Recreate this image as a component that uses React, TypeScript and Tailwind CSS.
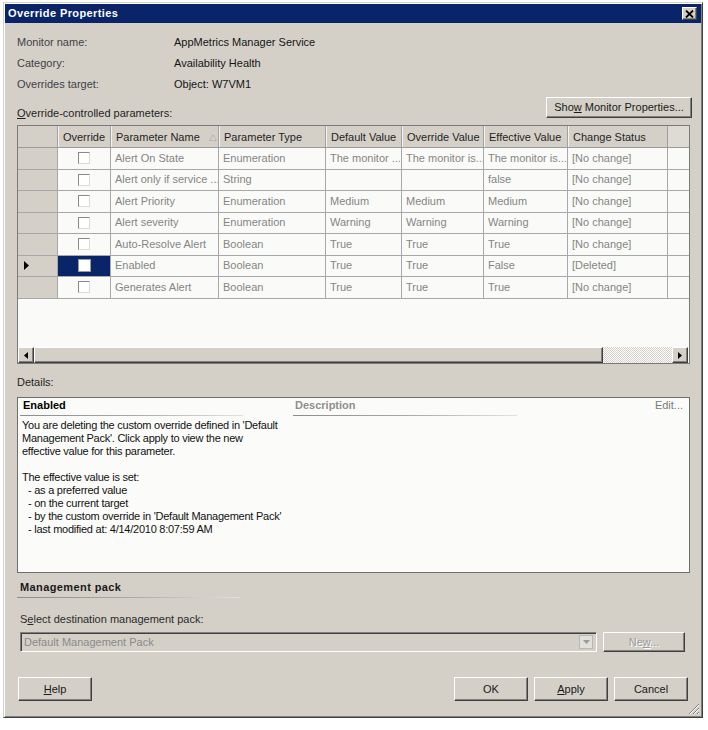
import React from "react";

const raised =
  "border border-t-white border-l-white border-r-[#404040] border-b-[#404040] shadow-[inset_-1px_-1px_0_#808080]";
const sunken =
  "border border-t-[#808080] border-l-[#808080] border-r-white border-b-white shadow-[inset_1px_1px_0_#404040]";

const rows = [
  ["Alert On State", "Enumeration", "The monitor ...", "The monitor is...", "The monitor is...", "[No change]"],
  ["Alert only if service ...", "String", "", "", "false", "[No change]"],
  ["Alert Priority", "Enumeration", "Medium", "Medium", "Medium", "[No change]"],
  ["Alert severity", "Enumeration", "Warning", "Warning", "Warning", "[No change]"],
  ["Auto-Resolve Alert", "Boolean", "True", "True", "True", "[No change]"],
  ["Enabled", "Boolean", "True", "True", "False", "[Deleted]"],
  ["Generates Alert", "Boolean", "True", "True", "True", "[No change]"],
];

const cols = "grid grid-cols-[40px_53px_108px_107px_76px_82px_84px_100px_1fr]";

function Check({ selected }: { selected?: boolean }) {
  return (
    <span
      className={
        selected
          ? "block w-[13px] h-[13px] bg-white border border-[#9a9a9a]"
          : "block w-[12px] h-[12px] bg-white border border-t-[#8a8a8a] border-l-[#8a8a8a] border-r-[#dcdcdc] border-b-[#dcdcdc]"
      }
    />
  );
}

function Btn({ children, className = "" }: { children: React.ReactNode; className?: string }) {
  return (
    <div className={`${raised} bg-[#d4d0c8] flex items-center justify-center text-[#1a1a1a] ${className}`}>
      {children}
    </div>
  );
}

function Fade({ w }: { w: string }) {
  return <div className={`h-px ${w} bg-gradient-to-r from-[#8c8c8c] via-[#a8a8a8] to-[#e2e2e2]`} />;
}

export default function App() {
  const headers = ["Override", "Parameter Name", "Parameter Type", "Default Value", "Override Value", "Effective Value", "Change Status"];
  const lines = [
    ["You are deleting the custom override defined in 'Default", false],
    ["Management Pack'. Click apply to view the new", false],
    ["effective value for this parameter.", false],
    ["\u00a0", false],
    ["The effective value is set:", false],
    ["- as a preferred value", true],
    ["- on the current target", true],
    ["- by the custom override in 'Default Management Pack'", true],
    ["- last modified at: 4/14/2010 8:07:59 AM", true],
  ] as const;

  return (
    <div className="w-[708px] h-[730px] bg-white pt-[2px] pl-[3px] font-['Liberation_Sans',Arial,sans-serif] text-[11px] leading-[13px]">
      <div className="w-[700px] h-[716px] p-[1px] bg-[#d4d0c8] border border-t-[#d4d0c8] border-l-[#d4d0c8] border-r-[#404040] border-b-[#404040] shadow-[inset_1px_1px_0_#ffffff,inset_-1px_-1px_0_#808080] flex flex-col">
        {/* title bar */}
        <div className="h-[19px] bg-[#0a246a] flex items-center justify-between pl-[3px] pr-[4px]">
          <span className="text-white font-bold text-[11px] tracking-[0.4px]">Override Properties</span>
          <div className={`${raised} w-[15px] h-[13px] bg-[#d4d0c8] flex items-center justify-center`}>
            <svg width="9" height="8" viewBox="0 0 9 8">
              <path d="M1 0.5 L8 7.5 M8 0.5 L1 7.5" stroke="#000" strokeWidth="1.8" />
            </svg>
          </div>
        </div>

        <div className="relative flex-1 pl-[12px] pr-[11px] pt-[9px] flex flex-col">
          {/* info */}
          {[
            ["Monitor name:", "AppMetrics Manager Service"],
            ["Category:", "Availability Health"],
            ["Overrides target:", "Object: W7VM1"],
          ].map(([k, v]) => (
            <div key={k} className="h-[21px] flex items-center">
              <span className="w-[157px] text-[#3f3f46]">{k}</span>
              <span className="text-[#151515]">{v}</span>
            </div>
          ))}

          <div className="h-[30px] flex justify-between">
            <span className="self-end pb-[5px] text-[#1f1f1f]">
              <u>O</u>verride-controlled parameters:
            </span>
            <Btn className="mt-[2px] mr-[-2px] w-[146px] h-[21px]">
              <span>
                Sho<u>w</u> Monitor Properties...
              </span>
            </Btn>
          </div>

          {/* grid */}
          <div className="h-[239px] border border-[#7a7a7a] bg-[#fafbf8] flex flex-col">
            <div className={`${cols} h-[22px] bg-[#d4d0c8] border-b border-[#9a9a9a]`}>
              <div className="border-r border-[#a0a0a0]" />
              {headers.map((h, i) => (
                <div
                  key={h}
                  className={`border-r border-[#a0a0a0] shadow-[inset_1px_0_0_#f4f4f4] flex items-center pt-[2px] whitespace-nowrap text-[#1f1f1f] ${
                    i === 0 ? "justify-center" : "pl-[5px]"
                  }`}
                >
                  {h}
                  {i === 1 && (
                    <svg className="ml-[9px] shrink-0" width="8" height="7" viewBox="0 0 8 7">
                      <path d="M4 0.5 L7.5 6.5 L0.5 6.5 Z" fill="none" stroke="#b8b8b8" />
                    </svg>
                  )}
                </div>
              ))}
              <div className="bg-[#dedbd4]" />
            </div>

            {rows.map((r, ri) => {
              const sel = ri === 5;
              return (
                <div key={ri} className={`${cols} h-[21.5px]`}>
                  <div className="bg-[#d4d0c8] border-r border-b border-[#a8a8a8] flex items-center pl-[6px]">
                    {sel && (
                      <svg width="5" height="9" viewBox="0 0 5 9">
                        <path d="M0 0 L5 4.5 L0 9 Z" fill="#000" />
                      </svg>
                    )}
                  </div>
                  <div
                    className={`border-r border-b border-[#a8a8a8] flex items-center justify-center ${
                      sel ? "bg-[#0a246a]" : ""
                    }`}
                  >
                    <Check selected={sel} />
                  </div>
                  {r.map((c, ci) => (
                    <div
                      key={ci}
                      className="border-r border-b border-[#a8a8a8] flex items-center pl-[4px] text-[#858585] whitespace-nowrap overflow-hidden"
                    >
                      {c}
                    </div>
                  ))}
                  <div className="border-b border-[#a8a8a8]" />
                </div>
              );
            })}
            <div className="flex-1" />

            {/* scrollbar */}
            <div className="h-[16px] flex">
              <Btn className="w-[16px] h-[16px]">
                <svg width="4" height="7" viewBox="0 0 4 7">
                  <path d="M4 0 L0 3.5 L4 7 Z" fill="#000" />
                </svg>
              </Btn>
              <div className={`${raised} w-[569px] h-[16px] bg-[#d4d0c8]`} />
              <div className="flex-1 h-[16px] bg-[repeating-conic-gradient(#ffffff_0%_25%,#d4d0c8_0%_50%)] bg-[length:2px_2px]" />
              <Btn className="w-[16px] h-[16px] mr-[1px]">
                <svg width="4" height="7" viewBox="0 0 4 7">
                  <path d="M0 0 L4 3.5 L0 7 Z" fill="#000" />
                </svg>
              </Btn>
            </div>
          </div>

          <div className="mt-[12px] text-[#1f1f1f]">Details:</div>

          {/* details */}
          <div className="mt-[8px] h-[176px] border border-[#6e6e6e] bg-[#fbfcf9] flex">
            <div className="w-[275px] pt-[1px]">
              <div className="pl-[5px] font-bold text-black">Enabled</div>
              <div className="ml-[2px] mt-[3px]">
                <Fade w="w-[223px]" />
              </div>
              <div className="mt-[3px] pl-[4px] text-[#111] tracking-[-0.25px]">
                {lines.map(([t, ind], i) => (
                  <div key={i} className={`whitespace-nowrap ${ind ? "pl-[6px]" : ""}`}>
                    {t}
                  </div>
                ))}
              </div>
            </div>
            <div className="flex-1 pt-[1px] relative">
              <div className="pl-[2px] font-bold text-[#8f8f8f]">Description</div>
              <div className="mt-[3px]">
                <Fade w="w-[224px]" />
              </div>
              <span className="absolute right-[6px] top-[1px] text-[#7a7a7a]">Edit...</span>
            </div>
          </div>

          {/* management pack */}
          <div className="mt-[8px] pl-[3px] font-bold text-[#1a1a1a] tracking-[0.4px]">Management pack</div>
          <div className="mt-[3px]">
            <Fade w="w-[223px]" />
          </div>
          <div className="mt-[15px] pl-[3px] text-[#2b2b2b]">
            S<u>e</u>lect destination management pack:
          </div>
          <div className="mt-[6px] flex">
            <div className={`${sunken} ml-[3px] w-[577px] h-[20px] bg-[#d4d0c8] flex items-center justify-between pl-[3px] pr-[3px]`}>
              <span className="text-[#8a8a8a]">Default Management Pack</span>
              <div className="w-[14px] h-[14px] border border-[#b8b8b8] bg-[#e2e0da] flex items-center justify-center">
                <svg width="7" height="4" viewBox="0 0 7 4">
                  <path d="M0 0 L7 0 L3.5 4 Z" fill="#9a9a9a" />
                </svg>
              </div>
            </div>
            <Btn className="ml-[6px] w-[82px] h-[20px]">
              <span className="text-[#9a9a9a] [text-shadow:1px_1px_0_#ffffff]">
                Ne<u>w</u>...
              </span>
            </Btn>
          </div>

          {/* buttons */}
          <div className="mt-[25px] flex items-center">
            <Btn className="ml-[1px] w-[74px] h-[24px]">
              <span>
                <u>H</u>elp
              </span>
            </Btn>
            <div className="flex-1" />
            <Btn className="w-[74px] h-[24px]">OK</Btn>
            <Btn className="ml-[6px] w-[74px] h-[24px]">
              <span>
                <u>A</u>pply
              </span>
            </Btn>
            <Btn className="ml-[6px] mr-[2px] w-[74px] h-[24px]">Cancel</Btn>
          </div>

          <svg className="absolute right-[1px] bottom-[1px]" width="12" height="12" viewBox="0 0 12 12">
            <path d="M11 1 L1 11 M11 5 L5 11 M11 9 L9 11" stroke="#808080" strokeWidth="1" />
            <path d="M11 2 L2 11 M11 6 L6 11 M11 10 L10 11" stroke="#ffffff" strokeWidth="1" />
          </svg>
        </div>
      </div>
    </div>
  );
}
